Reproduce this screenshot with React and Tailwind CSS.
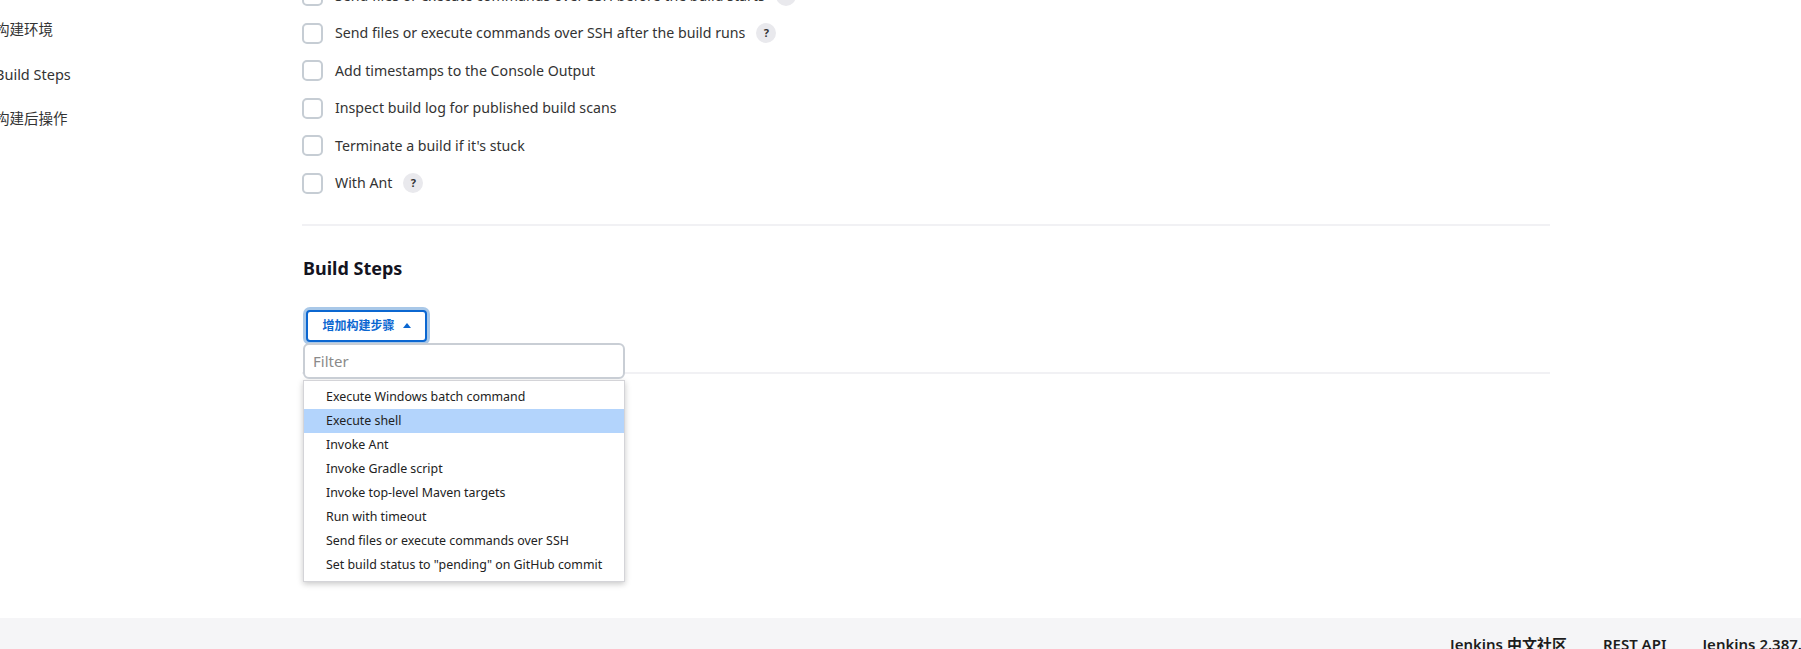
import React from 'react';

const font = { fontFamily: '"Noto Sans", "Noto Sans CJK SC", sans-serif' };

const options = [
  { label: 'Send files or execute commands over SSH before the build starts', help: true },
  { label: 'Send files or execute commands over SSH after the build runs', help: true },
  { label: 'Add timestamps to the Console Output' },
  { label: 'Inspect build log for published build scans' },
  { label: "Terminate a build if it's stuck" },
  { label: 'With Ant', help: true },
];

const steps = [
  'Execute Windows batch command',
  'Execute shell',
  'Invoke Ant',
  'Invoke Gradle script',
  'Invoke top-level Maven targets',
  'Run with timeout',
  'Send files or execute commands over SSH',
  'Set build status to "pending" on GitHub commit',
];

const HelpIcon = () => (
  <span className="ml-[11px] inline-flex h-[20px] w-[20px] items-center justify-center rounded-full bg-[#e9e9ed] text-[11px] font-bold text-[#333]">
    ?
  </span>
);

export default function App() {
  return (
    <div className="h-[649px] overflow-hidden bg-white flex flex-col text-[#333]" style={font}>
      <div className="flex flex-1 min-h-0">
        {/* sidebar, scrolled a bit off the left edge */}
        <aside className="w-[302px] shrink-0 pt-[19px]">
          <div className="-ml-[5px] flex flex-col gap-[24.5px] text-[14.5px] leading-[20px] text-[#333]">
            <span>构建环境</span>
            <span>Build Steps</span>
            <span>构建后操作</span>
          </div>
        </aside>

        <main className="w-[1248px] shrink-0">
          <div className="-mt-[23px]">
            {options.map((o) => (
              <label key={o.label} className="flex h-[37.5px] items-center">
                <span className="h-[21px] w-[21px] shrink-0 rounded-[5px] border-2 border-[#c6cdd4] bg-white" />
                <span className="ml-[12px] text-[14.2px] leading-[20px] text-[#333]">{o.label}</span>
                {o.help && <HelpIcon />}
              </label>
            ))}
          </div>

          <div className="mt-[22px] h-[2px] bg-[#f1f1f4]" />

          <h2 className="mt-[28px] pl-px text-[18px] font-bold leading-[28px] text-[#14141f]">Build Steps</h2>

          <div className="relative mt-[28px] pl-[4px]">
            <button className="flex h-[32px] w-[121px] items-center justify-center gap-[8px] rounded-[4px] border-2 border-[#0b67d1] bg-white text-[12px] font-semibold text-[#0b67d1] shadow-[0_0_0_3px_#a9c8e8]">
              增加构建步骤
              <svg width="8" height="5" viewBox="0 0 8 5" className="mb-px">
                <path d="M0 5 L4 0 L8 5 Z" fill="#0b67d1" />
              </svg>
            </button>

            {/* filter + menu popover */}
            <div className="absolute left-[1px] top-[33px] z-10 w-[322px]">
              <input
                readOnly
                placeholder="Filter"
                className="h-[36px] w-full rounded-[6px] border-2 border-[#c9ced5] bg-white px-[8px] text-[15px] text-[#333] placeholder:text-[#8a8a8a] outline-none"
              />
              <ul className="mt-[1px] border border-[#d4d4d8] bg-white py-[4px] shadow-[0_2px_6px_rgba(0,0,0,0.22)]">
                {steps.map((s) => (
                  <li
                    key={s}
                    className={`h-[24px] pl-[22px] text-[12.4px] leading-[24px] text-[#222] ${s === 'Execute shell' ? 'bg-[#b3d4fc]' : ''}`}
                  >
                    {s}
                  </li>
                ))}
              </ul>
            </div>
          </div>

          <div className="mt-[30px] h-[2px] bg-[#f1f1f4]" />
        </main>
      </div>

      <footer className="h-[31px] shrink-0 bg-[#f5f5f7]">
        <div className="flex gap-[36px] pl-[1450px] pt-[16px] text-[15px] font-semibold leading-[20px] text-[#1d1d1d]">
          <span className="whitespace-nowrap">Jenkins 中文社区</span>
          <span className="whitespace-nowrap">REST API</span>
          <span className="whitespace-nowrap">Jenkins 2.387.1</span>
        </div>
      </footer>
    </div>
  );
}
